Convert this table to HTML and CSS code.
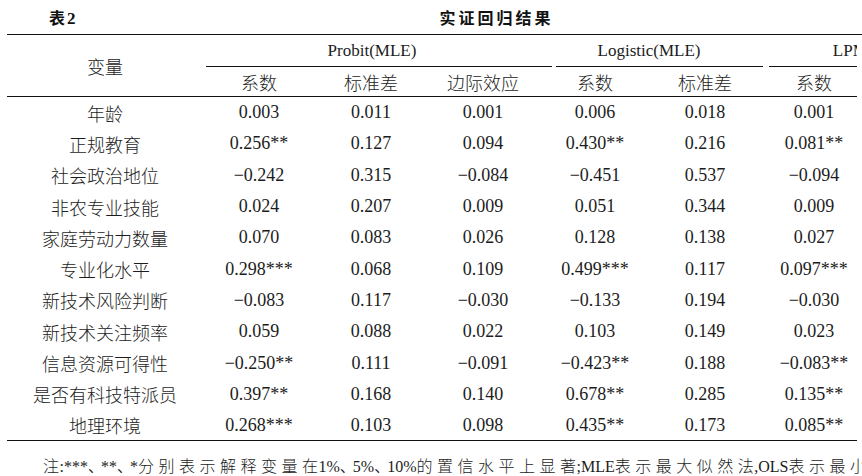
FILE: index.html
```html
<!DOCTYPE html>
<html lang="zh">
<head>
<meta charset="utf-8">
<title>表2 实证回归结果</title>
<link rel="stylesheet" href="styles.css">
</head>
<body>
<div class="page">
  <div class="titlebar">
    <span class="tno">表<span class="tnum">2</span></span>
    <span class="ttl">实证回归结果</span>
  </div>
  <div class="rule"></div>
  <div class="tablewrap">
    <table class="res">
      <colgroup>
        <col class="cv"><col class="c1"><col class="c2"><col class="c3"><col class="c4"><col class="c5"><col class="c6"><col class="c7">
      </colgroup>
      <thead>
        <tr class="grp">
          <th rowspan="2" class="var">变量</th>
          <th colspan="3"><div class="gl g-probit">Probit(MLE)</div></th>
          <th colspan="2"><div class="gl g-logit">Logistic(MLE)</div></th>
          <th colspan="2"><div class="gl g-lpm">LPM(OLS)</div></th>
        </tr>
        <tr class="sub">
          <th>系数</th><th>标准差</th><th>边际效应</th><th>系数</th><th>标准差</th><th>系数</th><th>标准差</th>
        </tr>
      </thead>
      <tbody>
        <tr><td>年龄</td><td>0.003</td><td>0.011</td><td>0.001</td><td>0.006</td><td>0.018</td><td>0.001</td><td></td></tr>
        <tr><td>正规教育</td><td>0.256**</td><td>0.127</td><td>0.094</td><td>0.430**</td><td>0.216</td><td>0.081**</td><td></td></tr>
        <tr><td>社会政治地位</td><td>−0.242</td><td>0.315</td><td>−0.084</td><td>−0.451</td><td>0.537</td><td>−0.094</td><td></td></tr>
        <tr><td>非农专业技能</td><td>0.024</td><td>0.207</td><td>0.009</td><td>0.051</td><td>0.344</td><td>0.009</td><td></td></tr>
        <tr><td>家庭劳动力数量</td><td>0.070</td><td>0.083</td><td>0.026</td><td>0.128</td><td>0.138</td><td>0.027</td><td></td></tr>
        <tr><td>专业化水平</td><td>0.298***</td><td>0.068</td><td>0.109</td><td>0.499***</td><td>0.117</td><td>0.097***</td><td></td></tr>
        <tr><td>新技术风险判断</td><td>−0.083</td><td>0.117</td><td>−0.030</td><td>−0.133</td><td>0.194</td><td>−0.030</td><td></td></tr>
        <tr><td>新技术关注频率</td><td>0.059</td><td>0.088</td><td>0.022</td><td>0.103</td><td>0.149</td><td>0.023</td><td></td></tr>
        <tr><td>信息资源可得性</td><td>−0.250**</td><td>0.111</td><td>−0.091</td><td>−0.423**</td><td>0.188</td><td>−0.083**</td><td></td></tr>
        <tr><td>是否有科技特派员</td><td>0.397**</td><td>0.168</td><td>0.140</td><td>0.678**</td><td>0.285</td><td>0.135**</td><td></td></tr>
        <tr class="last"><td>地理环境</td><td>0.268***</td><td>0.103</td><td>0.098</td><td>0.435**</td><td>0.173</td><td>0.085**</td><td></td></tr>
      </tbody>
    </table>
  </div>
  <p class="note"><span class="cj">注</span>:***<span class="dun">、</span>**<span class="dun">、</span>*<span class="cj">分别表示解释变量在</span>1%<span class="dun">、</span>5%<span class="dun">、</span>10%<span class="cj">的置信水平上显著</span>;MLE<span class="cj">表示最大似然法</span>,OLS<span class="cj">表示最小二乘法。</span></p>
</div>
</body>
</html>
```

FILE: styles.css
```css
html, body {
  margin: 0;
  padding: 0;
  background: #fff;
  overflow: hidden;
}
body {
  width: 862px;
  height: 476px;
  color: #1c1c1c;
  font-family: "Liberation Serif", "Noto Sans CJK SC", serif;
}
.page {
  width: 976px;
  padding-left: 7px;
}
.titlebar {
  display: grid;
  height: 34px;
  align-items: center;
}
.titlebar > span {
  grid-area: 1 / 1;
}
.tno {
  justify-self: start;
  margin-left: 42px;
  font-family: "Noto Sans CJK SC", sans-serif;
  font-weight: 700;
  font-size: 16px;
  color: #111;
}
.tnum {
  font-family: "Liberation Serif", serif;
  font-size: 17px;
  margin-left: 2px;
}
.ttl {
  justify-self: center;
  font-family: "Noto Sans CJK SC", sans-serif;
  font-weight: 700;
  font-size: 16px;
  letter-spacing: 3px;
  margin-right: -3px;
  color: #111;
}
.rule {
  border-top: 1px solid #111;
  width: 976px;
}
.tablewrap {
  width: 850px;
  overflow: hidden;
}
.res {
  table-layout: fixed;
  width: 976px;
  border-collapse: separate;
  border-spacing: 0;
  font-size: 18px;
}
.cv { width: 196px; }
.c1, .c2, .c3, .c4 { width: 112px; }
.c5 { width: 108px; }
.c6 { width: 110px; }
.c7 { width: 114px; }
.res th, .res td {
  padding: 0;
  text-align: center;
  font-weight: 300;
  white-space: nowrap;
}
.grp th {
  height: 32px;
  vertical-align: bottom;
  font-size: 17px;
}
.grp th.var {
  font-size: 18px;
  vertical-align: middle;
  border-bottom: 1px solid #111;
}
.gl {
  line-height: 31px;
  border-bottom: 1px solid #111;
}
.g-probit { margin: 0 -13px 0 3px; padding-right: 14px; }
.g-logit { margin: 0 -4px 0 17px; padding-right: 21px; }
.g-lpm { margin: 0 0 0 10px; padding-right: 8px; }
.sub th {
  height: 29px;
  border-bottom: 1px solid #111;
  vertical-align: middle;
}
.res tbody tr {
  height: 31.3px;
}
.res tbody td {
  vertical-align: middle;
}
.res tbody tr.last td {
  border-bottom: 1px solid #111;
}
.note {
  margin: 14px 0 0 36px;
  line-height: 20px;
  font-family: "Liberation Serif", "Noto Sans CJK SC", serif;
  font-size: 16px;
  white-space: nowrap;
}
.note .cj {
  font-family: "Noto Sans CJK SC", sans-serif;
  font-weight: 300;
  font-size: 16px;
  letter-spacing: 4.5px;
  margin-right: -4px;
}
.note .dun {
  font-family: "Noto Sans CJK SC", sans-serif;
  font-size: 15px;
  letter-spacing: -2px;
}
```
